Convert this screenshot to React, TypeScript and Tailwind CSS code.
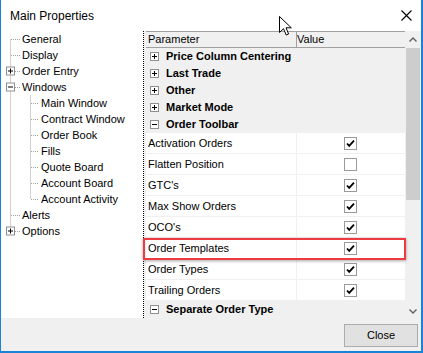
import React from "react";

const font = "font-['Liberation_Sans',Arial,sans-serif]";

type TreeItem = { label: string; level: number };

const treeItems: TreeItem[] = [
  { label: "General", level: 0 },
  { label: "Display", level: 0 },
  { label: "Order Entry", level: 0 },
  { label: "Windows", level: 0 },
  { label: "Main Window", level: 1 },
  { label: "Contract Window", level: 1 },
  { label: "Order Book", level: 1 },
  { label: "Fills", level: 1 },
  { label: "Quote Board", level: 1 },
  { label: "Account Board", level: 1 },
  { label: "Account Activity", level: 1 },
  { label: "Alerts", level: 0 },
  { label: "Options", level: 0 },
];

type Row =
  | { kind: "cat"; label: string; open: boolean }
  | { kind: "prop"; label: string; checked: boolean; marked?: boolean };

const rows: Row[] = [
  { kind: "cat", label: "Price Column Centering", open: false },
  { kind: "cat", label: "Last Trade", open: false },
  { kind: "cat", label: "Other", open: false },
  { kind: "cat", label: "Market Mode", open: false },
  { kind: "cat", label: "Order Toolbar", open: true },
  { kind: "prop", label: "Activation Orders", checked: true },
  { kind: "prop", label: "Flatten Position", checked: false },
  { kind: "prop", label: "GTC's", checked: true },
  { kind: "prop", label: "Max Show Orders", checked: true },
  { kind: "prop", label: "OCO's", checked: true },
  { kind: "prop", label: "Order Templates", checked: true, marked: true },
  { kind: "prop", label: "Order Types", checked: true },
  { kind: "prop", label: "Trailing Orders", checked: true },
  { kind: "cat", label: "Separate Order Type", open: true },
];

function ExpandBox({ open }: { open: boolean }) {
  return (
    <svg width="9" height="9" viewBox="0 0 9 9" className="shrink-0">
      <rect x="0.5" y="0.5" width="8" height="8" fill="#fff" stroke="#8f8f8f" />
      <path d="M2 4.5h5" stroke="#000" />
      {!open && <path d="M4.5 2v5" stroke="#000" />}
    </svg>
  );
}

function TreeLines() {
  const c = (i: number) => i * 16 + 8.5;
  const dot = { stroke: "#a0a0a0", strokeDasharray: "1 1" };
  const rootRows = [0, 1, 2, 3, 11, 12];
  const childRows = [4, 5, 6, 7, 8, 9, 10];
  const boxes: [number, boolean][] = [
    [2, false],
    [3, true],
    [12, false],
  ];
  return (
    <svg className="absolute left-0 top-0" width="142" height="287">
      <path d={`M9.5 ${c(0)}V${c(12)}`} {...dot} />
      {rootRows.map((r) => (
        <path key={r} d={`M10 ${c(r)}H19`} {...dot} />
      ))}
      <path d={`M29.5 ${c(3) + 8}V${c(10)}`} {...dot} />
      {childRows.map((r) => (
        <path key={r} d={`M30 ${c(r)}H38`} {...dot} />
      ))}
      {boxes.map(([r, open]) => (
        <g key={r}>
          <rect x="5.5" y={c(r) - 4.5} width="8" height="8" fill="#fff" stroke="#8f8f8f" />
          <path d={`M7 ${c(r) - 0.5}h5`} stroke="#000" />
          {!open && <path d={`M9.5 ${c(r) - 3}v5`} stroke="#000" />}
        </g>
      ))}
    </svg>
  );
}

function CheckBox({ checked }: { checked: boolean }) {
  return (
    <svg width="13" height="13" viewBox="0 0 13 13">
      <rect x="0.5" y="0.5" width="12" height="12" fill="#fff" stroke="#9a9a9a" />
      {checked && (
        <path d="M3 6.5l2.2 2.4L10 3.6" fill="none" stroke="#000" strokeWidth="1.8" />
      )}
    </svg>
  );
}

export default function App() {
  return (
    <div
      className={`${font} relative w-[423px] h-[353px] flex flex-col border-l border-r-2 border-b-2 border-[#1883d7] bg-[#f0f0f0] text-black overflow-hidden`}
    >
      {/* title bar */}
      <div className="h-[31px] bg-white flex items-center justify-between pl-[9px] pr-[9px] shrink-0">
        <span className="text-[12px] leading-[16px]">Main Properties</span>
        <svg width="11" height="11" viewBox="0 0 11 11">
          <path d="M0.5 0.5l10 10M10.5 0.5l-10 10" stroke="#000" strokeWidth="1.1" />
        </svg>
      </div>

      <div className="flex h-[287px] shrink-0">
        {/* tree */}
        <div className="relative w-[142px] bg-white shrink-0">
          <TreeLines />
          <div className="relative flex flex-col text-[11px]">
            {treeItems.map((t) => (
              <div
                key={t.label}
                className={`h-[16px] leading-[16px] whitespace-nowrap ${t.level === 0 ? "pl-[21px]" : "pl-[40px]"}`}
              >
                {t.label}
              </div>
            ))}
          </div>
        </div>

        {/* splitter */}
        <div className="w-px shrink-0 bg-[repeating-linear-gradient(to_bottom,#000_0px,#000_1px,#fff_1px,#fff_2px)]" />
        <div className="w-[2px] shrink-0" />

        {/* property grid */}
        <div className="relative w-[259px] flex flex-col text-[11px] bg-white shrink-0">
          <div className="h-[17px] flex border-y border-[#a0a0a0] bg-[#f0f0f0] shrink-0">
            <div className="w-[151px] pl-[2px] leading-[15px] border-r border-[#a0a0a0]">Parameter</div>
            <div className="flex-1 leading-[15px]">Value</div>
          </div>
          {rows.map((r) =>
            r.kind === "cat" ? (
              <div key={r.label} className="h-[17px] flex items-center gap-[7px] pl-[4px] bg-[#f0f0f0] font-bold shrink-0">
                <ExpandBox open={r.open} />
                <span className="leading-[17px]">{r.label}</span>
              </div>
            ) : (
              <div key={r.label} className="h-[21px] flex border-b border-[#f0f0f0] shrink-0">
                <div className="w-[151px] pl-[2px] leading-[20px] border-r border-[#f0f0f0]">{r.label}</div>
                <div className="flex-1 flex items-center justify-center pr-[1px]">
                  <CheckBox checked={r.checked} />
                </div>
              </div>
            )
          )}
          <div className="absolute left-[-3px] top-[207px] w-[263px] h-[22px] border-2 border-[#ee3b41] shadow-[0_1px_3px_rgba(0,0,0,0.35)]" />
        </div>

        {/* scrollbar */}
        <div className="w-[16px] flex flex-col bg-[#f0f0f0] shrink-0">
          <div className="h-[17px] flex items-center justify-center shrink-0">
            <svg width="8" height="5" viewBox="0 0 8 5">
              <path d="M0.5 4.5L4 1l3.5 3.5" fill="none" stroke="#606060" strokeWidth="1.4" />
            </svg>
          </div>
          <div className="h-[152px] mx-px bg-[#cdcdcd] shrink-0" />
          <div className="flex-1" />
          <div className="h-[17px] flex items-start justify-center pt-[8px] shrink-0">
            <svg width="8" height="5" viewBox="0 0 8 5">
              <path d="M0.5 0.5L4 4l3.5-3.5" fill="none" stroke="#606060" strokeWidth="1.4" />
            </svg>
          </div>
        </div>
      </div>

      {/* bottom */}
      <div className="flex-1 flex justify-end items-start pt-[6px] pr-[3px]">
        <button className="w-[74px] h-[23px] border border-[#adadad] bg-[#e1e1e1] text-[11px] leading-[21px]">
          Close
        </button>
      </div>

      {/* mouse pointer */}
      <svg className="absolute left-[278px] top-[16px]" width="13" height="21" viewBox="0 0 13 21">
        <path
          d="M0.5 0.5V16.5L4.5 12.7L7.2 19L9.6 18L7 11.8H12.3Z"
          fill="#fff"
          stroke="#000"
          strokeLinejoin="round"
        />
      </svg>
    </div>
  );
}
